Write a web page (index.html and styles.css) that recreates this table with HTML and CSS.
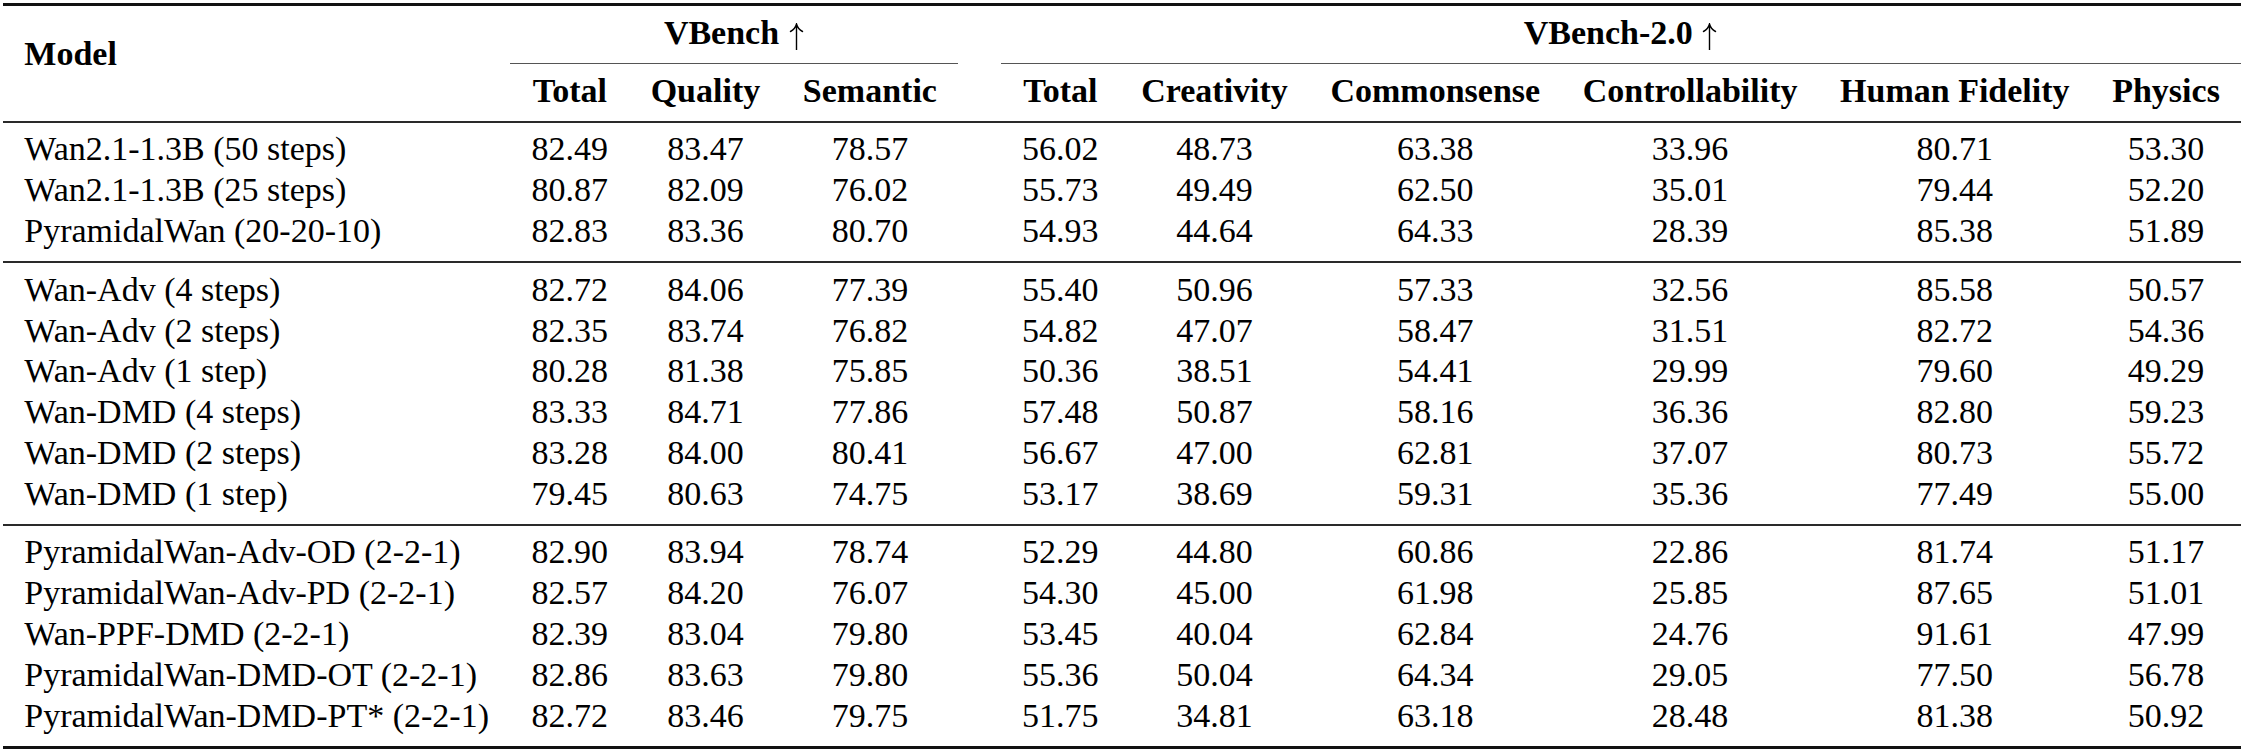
FILE: index.html
```html
<!DOCTYPE html>
<html lang="en">
<head>
<meta charset="utf-8">
<title>VBench results</title>
<link rel="stylesheet" href="styles.css">
</head>
<body>
<table class="results">
  <thead>
    <tr class="group-row">
      <th class="model model-head" rowspan="2">Model</th>
      <th class="group" colspan="3">VBench <svg class="arrow" viewBox="0 0 17 27" aria-label="↑"><path d="M8.5 1.5V27M2.5 8.5C5.5 7 7.5 4.5 8.5 1C9.5 4.5 11.5 7 14.5 8.5"/></svg></th>
      <th class="gap"></th>
      <th class="group" colspan="6">VBench-2.0 <svg class="arrow" viewBox="0 0 17 27" aria-label="↑"><path d="M8.5 1.5V27M2.5 8.5C5.5 7 7.5 4.5 8.5 1C9.5 4.5 11.5 7 14.5 8.5"/></svg></th>
    </tr>
    <tr class="col-row">
      <th>Total</th>
      <th>Quality</th>
      <th>Semantic</th>
      <th class="gap"></th>
      <th>Total</th>
      <th>Creativity</th>
      <th>Commonsense</th>
      <th>Controllability</th>
      <th>Human Fidelity</th>
      <th>Physics</th>
    </tr>
  </thead>
  <tbody>
    <tr><td class="model">Wan2.1-1.3B (50 steps)</td><td>82.49</td><td>83.47</td><td>78.57</td><td class="gap"></td><td>56.02</td><td>48.73</td><td>63.38</td><td>33.96</td><td>80.71</td><td>53.30</td></tr>
    <tr><td class="model">Wan2.1-1.3B (25 steps)</td><td>80.87</td><td>82.09</td><td>76.02</td><td class="gap"></td><td>55.73</td><td>49.49</td><td>62.50</td><td>35.01</td><td>79.44</td><td>52.20</td></tr>
    <tr><td class="model">PyramidalWan (20-20-10)</td><td>82.83</td><td>83.36</td><td>80.70</td><td class="gap"></td><td>54.93</td><td>44.64</td><td>64.33</td><td>28.39</td><td>85.38</td><td>51.89</td></tr>
  </tbody>
  <tbody>
    <tr><td class="model">Wan-Adv (4 steps)</td><td>82.72</td><td>84.06</td><td>77.39</td><td class="gap"></td><td>55.40</td><td>50.96</td><td>57.33</td><td>32.56</td><td>85.58</td><td>50.57</td></tr>
    <tr><td class="model">Wan-Adv (2 steps)</td><td>82.35</td><td>83.74</td><td>76.82</td><td class="gap"></td><td>54.82</td><td>47.07</td><td>58.47</td><td>31.51</td><td>82.72</td><td>54.36</td></tr>
    <tr><td class="model">Wan-Adv (1 step)</td><td>80.28</td><td>81.38</td><td>75.85</td><td class="gap"></td><td>50.36</td><td>38.51</td><td>54.41</td><td>29.99</td><td>79.60</td><td>49.29</td></tr>
    <tr><td class="model">Wan-DMD (4 steps)</td><td>83.33</td><td>84.71</td><td>77.86</td><td class="gap"></td><td>57.48</td><td>50.87</td><td>58.16</td><td>36.36</td><td>82.80</td><td>59.23</td></tr>
    <tr><td class="model">Wan-DMD (2 steps)</td><td>83.28</td><td>84.00</td><td>80.41</td><td class="gap"></td><td>56.67</td><td>47.00</td><td>62.81</td><td>37.07</td><td>80.73</td><td>55.72</td></tr>
    <tr><td class="model">Wan-DMD (1 step)</td><td>79.45</td><td>80.63</td><td>74.75</td><td class="gap"></td><td>53.17</td><td>38.69</td><td>59.31</td><td>35.36</td><td>77.49</td><td>55.00</td></tr>
  </tbody>
  <tbody>
    <tr><td class="model">PyramidalWan-Adv-OD (2-2-1)</td><td>82.90</td><td>83.94</td><td>78.74</td><td class="gap"></td><td>52.29</td><td>44.80</td><td>60.86</td><td>22.86</td><td>81.74</td><td>51.17</td></tr>
    <tr><td class="model">PyramidalWan-Adv-PD (2-2-1)</td><td>82.57</td><td>84.20</td><td>76.07</td><td class="gap"></td><td>54.30</td><td>45.00</td><td>61.98</td><td>25.85</td><td>87.65</td><td>51.01</td></tr>
    <tr><td class="model">Wan-PPF-DMD (2-2-1)</td><td>82.39</td><td>83.04</td><td>79.80</td><td class="gap"></td><td>53.45</td><td>40.04</td><td>62.84</td><td>24.76</td><td>91.61</td><td>47.99</td></tr>
    <tr><td class="model">PyramidalWan-DMD-OT (2-2-1)</td><td>82.86</td><td>83.63</td><td>79.80</td><td class="gap"></td><td>55.36</td><td>50.04</td><td>64.34</td><td>29.05</td><td>77.50</td><td>56.78</td></tr>
    <tr><td class="model">PyramidalWan-DMD-PT* (2-2-1)</td><td>82.72</td><td>83.46</td><td>79.75</td><td class="gap"></td><td>51.75</td><td>34.81</td><td>63.18</td><td>28.48</td><td>81.38</td><td>50.92</td></tr>
  </tbody>
</table>
</body>
</html>
```

FILE: styles.css
```css
html, body {
  margin: 0;
  padding: 0;
  background: #ffffff;
}

body {
  font-family: "Liberation Serif", "Times New Roman", serif;
  color: #000000;
}

.results {
  border-collapse: separate;
  border-spacing: 0;
  margin: 3px 0 0 3px;
  border-top: 3px solid #111111;
  border-bottom: 3px solid #111111;
  font-size: 34px;
  line-height: 34.1px;
}

.results th,
.results td {
  padding: 0 21.3px 6.7px;
  text-align: center;
  vertical-align: top;
  white-space: nowrap;
}

.results th {
  font-weight: 700;
}

.results .model {
  text-align: left;
}

.results thead th {
  padding-top: 9.9px;
  padding-bottom: 12.8px;
}

.results .group-row .group {
  border-bottom: 1px solid #555555;
}

.results .col-row th,
.results .model-head {
  border-bottom: 2px solid #2a2a2a;
}

.results thead .model-head {
  padding-top: 31.2px;
  padding-bottom: 0;
}

.arrow {
  display: inline-block;
  width: 17px;
  height: 27px;
  vertical-align: -6px;
  fill: none;
  stroke: #000000;
  stroke-width: 1.4;
  stroke-linecap: round;
}

.results tbody tr:first-child td {
  padding-top: 9.9px;
}

.results tbody tr:last-child td {
  padding-bottom: 12.8px;
}

.results tbody + tbody tr:first-child td {
  border-top: 2px solid #2a2a2a;
}
```
